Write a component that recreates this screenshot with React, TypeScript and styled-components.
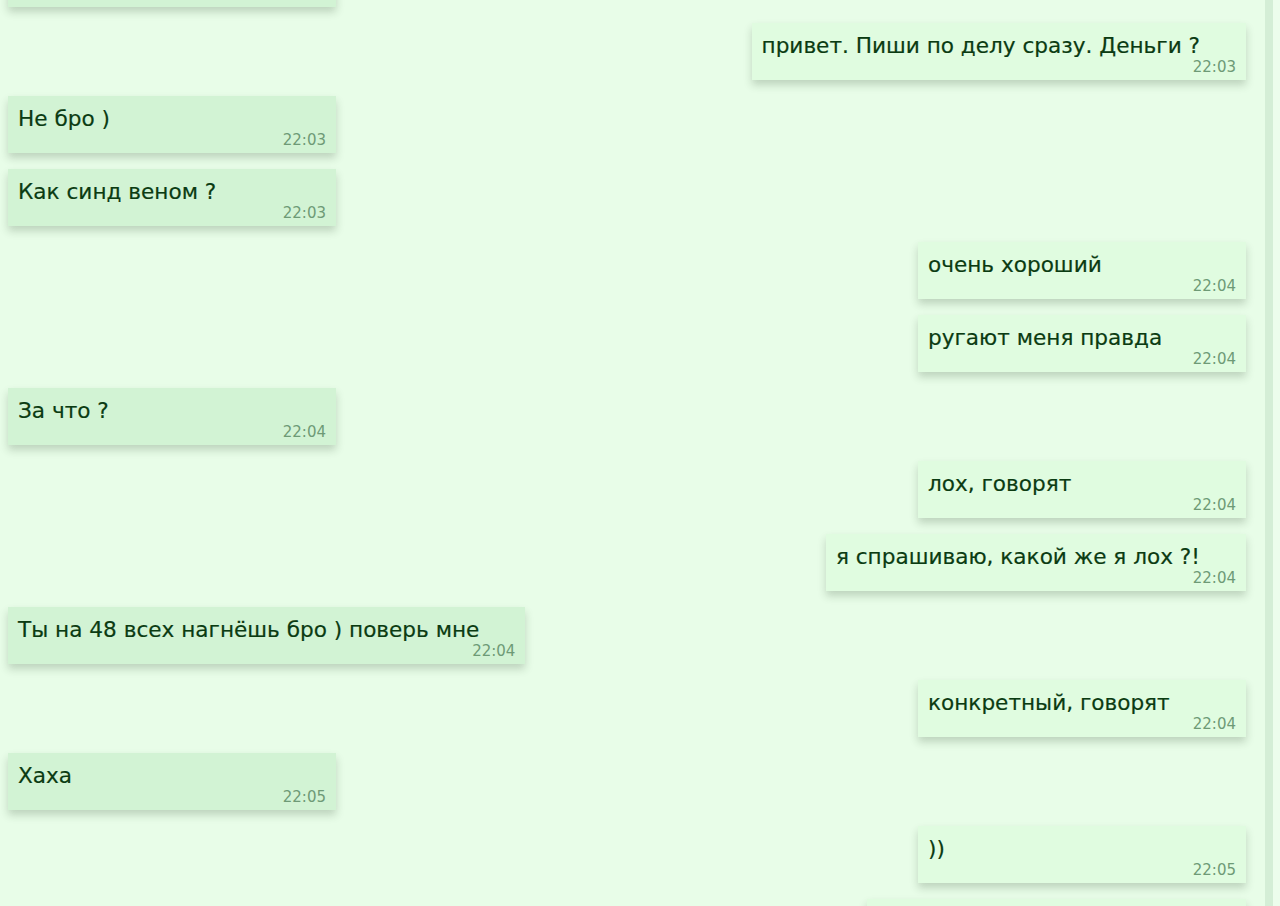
import React from 'react'
import styled, { createGlobalStyle } from 'styled-components'

const GlobalStyle = createGlobalStyle`
    html, body {
        margin: 0;
        padding: 0;
        height: 906px;
        overflow: hidden;
        background: #e8fde8;
    }
    * {
        box-sizing: border-box;
    }
`

type Side = 'in' | 'out'

type Message = {
    side: Side
    text: string
    time: string
}

const messages: Message[] = [
    { side: 'in', text: 'Ну чё, как сам ?', time: '22:02' },
    { side: 'out', text: 'привет. Пиши по делу сразу. Деньги ?', time: '22:03' },
    { side: 'in', text: 'Не бро )', time: '22:03' },
    { side: 'in', text: 'Как синд веном ?', time: '22:03' },
    { side: 'out', text: 'очень хороший', time: '22:04' },
    { side: 'out', text: 'ругают меня правда', time: '22:04' },
    { side: 'in', text: 'За что ?', time: '22:04' },
    { side: 'out', text: 'лох, говорят', time: '22:04' },
    { side: 'out', text: 'я спрашиваю, какой же я лох ?!', time: '22:04' },
    { side: 'in', text: 'Ты на 48 всех нагнёшь бро ) поверь мне', time: '22:04' },
    { side: 'out', text: 'конкретный, говорят', time: '22:04' },
    { side: 'in', text: 'Хаха', time: '22:05' },
    { side: 'out', text: '))', time: '22:05' },
    { side: 'out', text: 'ну да, так и есть наверное )', time: '22:05' },
]

const Screen = styled.div`
    display: flex;
    height: 906px;
    overflow: hidden;
    background: #e8fde8;
`

const Feed = styled.ul`
    flex: 1;
    display: flex;
    flex-direction: column;
    gap: 16px;
    list-style: none;
    margin: -50px 0 0;
    padding: 0 19px 0 8px;
`

const Row = styled.li<{ $side: Side }>`
    display: flex;
    justify-content: ${({ $side }) => ($side === 'out' ? 'flex-end' : 'flex-start')};
`

const Bubble = styled.div<{ $side: Side }>`
    min-width: 328px;
    padding: 10px 10px 4px;
    background: ${({ $side }) => ($side === 'out' ? '#e0fce0' : '#d2f3d4')};
    box-shadow: 0 5px 8px rgba(40, 70, 40, 0.22);
    font-family: 'DejaVu Sans', Verdana, sans-serif;
`

const Text = styled.div`
    margin-right: 36px;
    font-size: 21.6px;
    line-height: 25px;
    color: #0b3b12;
    white-space: nowrap;
    -webkit-text-stroke: 0.2px #0b3b12;
`

const Time = styled.div`
    font-size: 15px;
    line-height: 18px;
    text-align: right;
    color: #6e9a76;
`

const Rail = styled.div`
    width: 15px;
    display: flex;
`

const Track = styled.div`
    width: 8px;
    background: #d4eed6;
`

const Edge = styled.div`
    flex: 1;
    background: #ecfdec;
`

export default function App() {
    return (
        <>
            <GlobalStyle />
            <Screen>
                <Feed>
                    {messages.map((m, i) => (
                        <Row key={i} $side={m.side}>
                            <Bubble $side={m.side}>
                                <Text>{m.text}</Text>
                                <Time>{m.time}</Time>
                            </Bubble>
                        </Row>
                    ))}
                </Feed>
                <Rail>
                    <Track />
                    <Edge />
                </Rail>
            </Screen>
        </>
    )
}
